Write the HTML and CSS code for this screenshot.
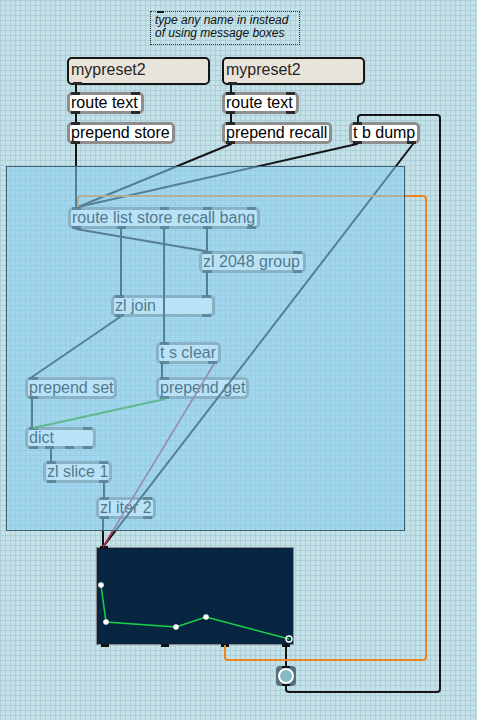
FILE: index.html
```html
<!DOCTYPE html>
<html>
<head>
<meta charset="utf-8">
<link rel="stylesheet" href="styles.css">
</head>
<body>
<div class="patch">
  <div class="comment">type any name in instead<br>of using message boxes<span class="cport"></span></div>

  <div class="msg m1">mypreset2<span class="io out-l"></span></div>
  <div class="msg m2">mypreset2<span class="io out-l"></span></div>

  <div class="obj o-rt1">route text<span class="io in-l"></span><span class="io in-r"></span><span class="io out-l"></span><span class="io out-r"></span></div>
  <div class="obj o-ps">prepend store<span class="io in-l"></span><span class="io out-l"></span></div>
  <div class="obj o-rt2">route text<span class="io in-l"></span><span class="io in-r"></span><span class="io out-l"></span><span class="io out-r"></span></div>
  <div class="obj o-pr">prepend recall<span class="io in-l"></span><span class="io out-l"></span></div>
  <div class="obj o-tbd">t b dump<span class="io in-l"></span><span class="io out-l"></span><span class="io out-r"></span></div>

  <div class="obj o-route">route list store recall bang<span class="io in-l"></span><span class="io in-r"></span><span class="io out-l"></span><span class="io out-p p49"></span><span class="io out-p p92"></span><span class="io out-p p135"></span><span class="io out-r"></span><span class="io in-p p92"></span><span class="io in-p p135"></span></div>
  <div class="obj o-group">zl 2048 group<span class="io in-l"></span><span class="io in-r"></span><span class="io out-l"></span><span class="io out-r"></span></div>
  <div class="obj o-join">zl join<span class="io in-l"></span><span class="io in-r"></span><span class="io out-l"></span><span class="io out-r"></span></div>
  <div class="obj o-tsc">t s clear<span class="io in-l"></span><span class="io out-l"></span><span class="io out-r"></span></div>
  <div class="obj o-pset">prepend set<span class="io in-l"></span><span class="io out-l"></span></div>
  <div class="obj o-pget">prepend get<span class="io in-l"></span><span class="io out-l"></span></div>
  <div class="obj o-dict">dict<span class="io in-l"></span><span class="io in-r"></span><span class="io out-l"></span><span class="io out-p p17"></span><span class="io out-p p37"></span><span class="io out-r"></span></div>
  <div class="obj o-slice">zl slice 1<span class="io in-l"></span><span class="io in-r"></span><span class="io out-l"></span><span class="io out-r"></span></div>
  <div class="obj o-iter">zl iter 2<span class="io in-l"></span><span class="io in-r"></span><span class="io out-l"></span><span class="io out-r"></span></div>

  <div class="mslider">
    <svg class="ms-svg" width="198" height="98" viewBox="0 0 198 98">
      <polyline points="5,38 10,75 80,80 110,70 193,92" fill="none" stroke="#17d24a" stroke-width="1.5"/>
      <circle cx="5" cy="38" r="2.8" fill="#fff"/>
      <circle cx="10" cy="75" r="2.8" fill="#fff"/>
      <circle cx="80" cy="80" r="2.8" fill="#fff"/>
      <circle cx="110" cy="70" r="2.8" fill="#fff"/>
      <circle cx="193" cy="92" r="3" fill="none" stroke="#fff" stroke-width="1.4"/>
    </svg>
    <span class="mio mi-in"></span>
    <span class="mio mo1"></span><span class="mio mo2"></span><span class="mio mo3"></span><span class="mio mo4"></span>
  </div>

  <div class="btn"><span class="btn-ring"></span><span class="bio bio-in"></span><span class="bio bio-out"></span></div>

  <svg class="wires" width="477" height="720" viewBox="0 0 477 720">
    <g fill="none" stroke="#151515" stroke-width="2" stroke-linecap="round" stroke-linejoin="round">
      <path d="M76,85 V92"/>
      <path d="M76,114 V122"/>
      <path d="M76,144 V207"/>
      <path d="M231,85 V92"/>
      <path d="M231,114 V122"/>
      <path d="M231,144 L78,207"/>
      <path d="M357,144 L78,207"/>
      <path d="M413,144 L103,547"/>
      <path d="M358,122 V118 Q358,115 361,115 H437 Q440,115 440,118 V689 Q440,692 437,692 H289 Q286,692 286,689 V686"/>
      <path d="M286,645 V666"/>
      <path d="M103,519 V547"/>
      <path d="M76,229 L205,251"/>
      <path d="M121,229 V295"/>
      <path d="M164,229 V342"/>
      <path d="M207,229 V251"/>
      <path d="M207,273 V295"/>
      <path d="M120,317 L32,377"/>
      <path d="M162,364 V377"/>
      <path d="M32,399 V427"/>
      <path d="M51,449 V461"/>
      <path d="M104,483 V497"/>
    </g>
    <path d="M225,645 V657 Q225,660 228,660 H423 Q426,660 426,657 V199 Q426,196 423,196 H81 Q78,196 78,199 V207" fill="none" stroke="#ea8526" stroke-width="2" stroke-linejoin="round"/>
    <path d="M214,364 L103,547" fill="none" stroke="#b03050" stroke-width="1.6"/>
    <path d="M165,399 L33,428" fill="none" stroke="#2f9a08" stroke-width="2"/>
  </svg>

  <div class="panel"></div>
</div>
</body>
</html>
```
FILE: styles.css
```css
html, body {
  margin: 0;
  padding: 0;
}
body {
  background: #c6e2e8;
}
.patch {
  position: relative;
  width: 477px;
  height: 720px;
  overflow: hidden;
  background-color: #c6e2e8;
  background-image:
    linear-gradient(to right, #abd0da 1px, transparent 1px),
    linear-gradient(to bottom, #abd0da 1px, transparent 1px);
  background-size: 5px 5px;
  font-family: "Liberation Sans", Arial, sans-serif;
}

.comment {
  position: absolute;
  left: 150px;
  top: 11px;
  border: 1px dotted #333;
  box-sizing: content-box;
  font-style: italic;
  font-size: 12px;
  line-height: 13px;
  color: #111;
  padding: 2px 0 0 4px;
  width: 144px;
  height: 30px;
}
.cport {
  position: absolute;
  left: 6px;
  top: -1px;
  width: 7px;
  height: 2px;
  background: #111;
}

.msg {
  position: absolute;
  top: 57px;
  width: 143px;
  height: 28px;
  box-sizing: border-box;
  border: 2px solid #151515;
  border-radius: 5px;
  background: #e9e4da;
  color: #252525;
  font-size: 16px;
  line-height: 22px;
  padding-left: 2px;
}
.m1 { left: 67px; }
.m2 { left: 222px; }
.msg .out-l { bottom: -2px; left: 4px; }

.obj {
  position: absolute;
  height: 22px;
  box-sizing: border-box;
  border: 3px solid #8e8e8e;
  border-radius: 5px;
  background: #fff;
  color: #000;
  font-size: 16px;
  line-height: 16px;
  padding-left: 1px;
  white-space: nowrap;
}
.io {
  position: absolute;
  width: 9px;
  height: 3px;
  background: #2a2a2a;
}
.in-l { top: -3px; left: 1px; }
.in-r { top: -3px; right: 1px; }
.out-l { bottom: -3px; left: 1px; }
.out-r { bottom: -3px; right: 1px; }
.in-p { top: -3px; }
.out-p { bottom: -3px; }
.p17 { left: 17px; }
.p37 { left: 37px; }
.p49 { left: 46px; }
.p92 { left: 89px; }
.p135 { left: 132px; }

.o-rt1 { left: 67px; top: 92px; width: 77px; }
.o-ps { left: 67px; top: 122px; width: 108px; }
.o-rt2 { left: 222px; top: 92px; width: 77px; }
.o-pr { left: 222px; top: 122px; width: 110px; }
.o-tbd { left: 349px; top: 122px; width: 71px; }

.o-route { left: 68px; top: 207px; width: 192px; }
.o-group { left: 199px; top: 251px; width: 107px; }
.o-join { left: 111px; top: 295px; width: 104px; }
.o-tsc { left: 156px; top: 342px; width: 65px; }
.o-pset { left: 25px; top: 377px; width: 92px; }
.o-pget { left: 156px; top: 377px; width: 93px; }
.o-dict { left: 25px; top: 427px; width: 71px; }
.o-slice { left: 43px; top: 461px; width: 69px; }
.o-iter { left: 96px; top: 497px; width: 60px; }

.mslider {
  position: absolute;
  left: 96px;
  top: 547px;
  width: 198px;
  height: 98px;
  box-sizing: border-box;
  background: #062541;
  border: 1px solid #8a8a8a;
}
.ms-svg {
  position: absolute;
  left: -1px;
  top: -1px;
  display: block;
}
.mio {
  position: absolute;
  width: 8px;
  height: 3px;
  background: #111;
}
.mi-in { top: -2px; left: 3px; }
.mo1 { bottom: -3px; left: 4px; }
.mo2 { bottom: -3px; left: 64px; }
.mo3 { bottom: -3px; left: 124px; }
.mo4 { bottom: -3px; left: 185px; }

.btn {
  position: absolute;
  left: 276px;
  top: 666px;
  width: 20px;
  height: 20px;
  border-radius: 4px;
  background: #55707d;
}
.btn-ring {
  position: absolute;
  left: 2px;
  top: 2px;
  width: 12px;
  height: 12px;
  border: 2px solid #fff;
  border-radius: 50%;
  background: #86b9c6;
}
.bio {
  position: absolute;
  left: 6px;
  width: 8px;
  height: 2px;
  background: #111;
}
.bio-in { top: 0; }
.bio-out { bottom: 0; }

.wires {
  position: absolute;
  left: 0;
  top: 0;
  display: block;
  pointer-events: none;
}

.panel {
  position: absolute;
  left: 6px;
  top: 166px;
  width: 399px;
  height: 365px;
  box-sizing: border-box;
  border: 1px solid #3f6070;
  background: rgba(135, 205, 240, 0.58);
}
```
